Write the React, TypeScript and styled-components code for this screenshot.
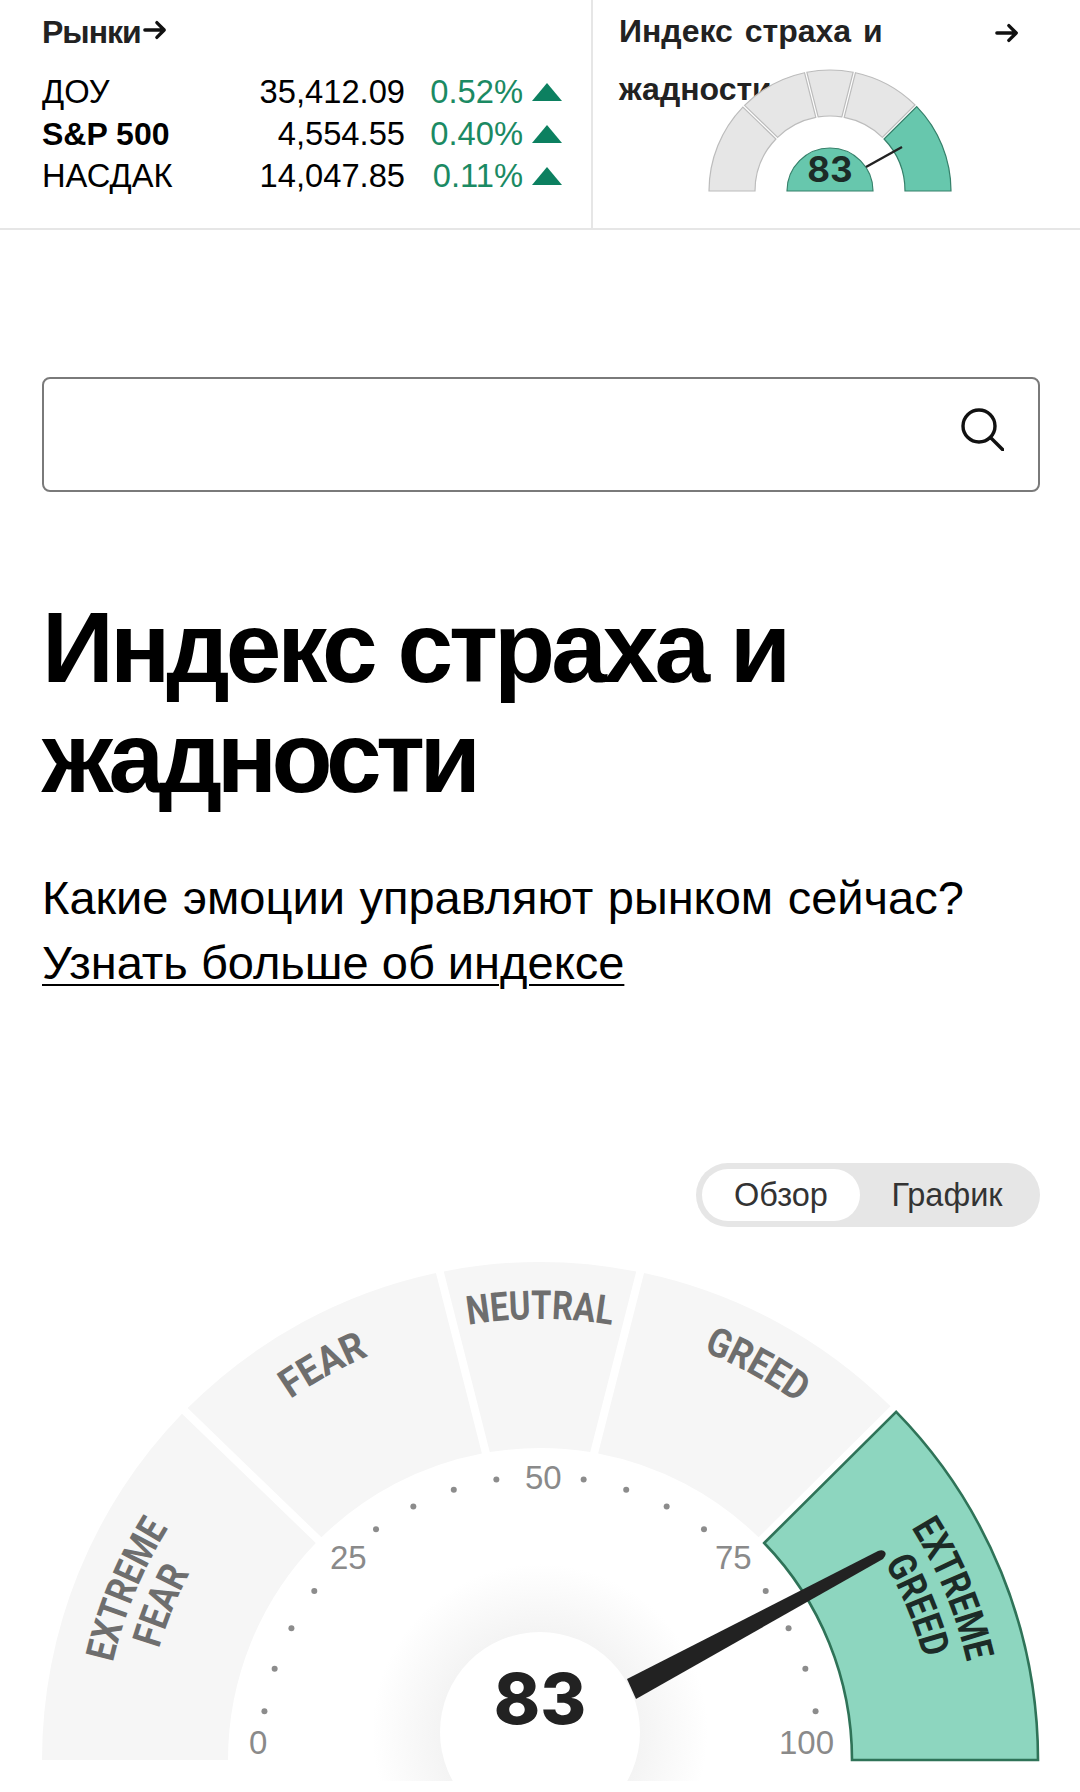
import React from 'react'
import styled, { createGlobalStyle } from 'styled-components'

const GlobalStyle = createGlobalStyle`
  html, body { margin: 0; padding: 0; background: #fff; }
  body { font-family: "Liberation Sans", Arial, sans-serif; color: #000; }
`

type Edge = { o: number; i: number; g: number }

const EDGES: Edge[] = [
  { o: 0, i: 0, g: 0 },
  { o: 44.5, i: 44.8, g: 4 },
  { o: 78.4, i: 80, g: 4 },
  { o: 101.6, i: 100, g: 4 },
  { o: 135.2, i: 135.2, g: 4 },
  { o: 180, i: 180, g: 0 },
]

const rad = (a: number) => (a * Math.PI) / 180
const deg = (a: number) => (a * 180) / Math.PI

const pt = (cx: number, cy: number, r: number, a: number) =>
  `${(cx - r * Math.cos(rad(a))).toFixed(2)} ${(cy - r * Math.sin(rad(a))).toFixed(2)}`

// one gauge slice, the gap is kept parallel to the edge
function slice(cx: number, cy: number, r0: number, r1: number, from: Edge, to: Edge, gap: number) {
  const g1 = from.g ? gap : 0
  const g2 = to.g ? gap : 0
  const a = from.o + deg(Math.asin(g1 / r1))
  const b = to.o - deg(Math.asin(g2 / r1))
  const c = to.i - deg(Math.asin(g2 / r0))
  const d = from.i + deg(Math.asin(g1 / r0))
  return `M${pt(cx, cy, r0, d)} L${pt(cx, cy, r1, a)} A${r1} ${r1} 0 0 1 ${pt(cx, cy, r1, b)} L${pt(cx, cy, r0, c)} A${r0} ${r0} 0 0 0 ${pt(cx, cy, r0, d)} Z`
}

const markets = [
  { name: 'ДОУ', value: '35,412.09', pct: '0.52%' },
  { name: 'S&P 500', value: '4,554.55', pct: '0.40%', bold: true },
  { name: 'НАСДАК', value: '14,047.85', pct: '0.11%' },
]

const CX = 498
const CY = 509

const labels = [
  { id: 'l1', text: 'EXTREME', r: 438, a: 22.4, len: 146 },
  { id: 'l2', text: 'FEAR', r: 397, a: 22.2, len: 82 },
  { id: 'l3', text: 'FEAR', r: 439, a: 61.2, len: 90 },
  { id: 'l4', text: 'NEUTRAL', r: 441, a: 90, len: 144 },
  { id: 'l5', text: 'GREED', r: 440, a: 118.8, len: 108 },
  { id: 'l6', text: 'EXTREME', r: 438, a: 157.5, len: 146, active: true },
  { id: 'l7', text: 'GREED', r: 397, a: 157.7, len: 103, active: true },
]

const scale = [
  { t: '0', x: 207, y: 503 },
  { t: '25', x: 288, y: 318 },
  { t: '50', x: 483, y: 238 },
  { t: '75', x: 673, y: 318 },
  { t: '100', x: 737, y: 503 },
]

const dots = Array.from({ length: 19 }, (_, i) => (i + 1) * 9).filter((a) => a % 45 !== 0 && a < 180)

function ArrowIcon() {
  return (
    <svg width="24" height="22" viewBox="0 0 26 22" fill="none" stroke="#111" strokeWidth="3.6" strokeLinecap="round" strokeLinejoin="round">
      <path d="M2 11h21M15 3l8 8-8 8" />
    </svg>
  )
}

function MiniGauge() {
  const cx = 125
  const cy = 123
  return (
    <MiniSvg width="250" height="126" viewBox="0 0 250 126">
      {EDGES.slice(0, 5).map((e, i) => (
        <path
          key={i}
          d={slice(cx, cy, 75, 121, e, EDGES[i + 1], 1.2)}
          fill={i === 4 ? '#67c7ad' : '#e6e6e6'}
          stroke={i === 4 ? '#35806a' : '#bcbcbc'}
          strokeWidth="1.2"
        />
      ))}
      <path d={`M${cx - 43} ${cy} A43 43 0 0 1 ${cx + 43} ${cy} Z`} fill="#67c7ad" stroke="#35806a" strokeWidth="1.2" />
      <line x1={161} y1={99} x2={197} y2={79} stroke="#222" strokeWidth="2.4" />
      <MiniValue x={cx} y={114}>83</MiniValue>
    </MiniSvg>
  )
}

function BigGauge() {
  return (
    <GaugeSvg width="998" height="530" viewBox="0 0 998 530">
      <defs>
        <radialGradient id="glow" cx="50%" cy="50%" r="50%">
          <stop offset="60%" stopColor="#f4f4f4" />
          <stop offset="100%" stopColor="#ffffff" />
        </radialGradient>
        {labels.map((l) => (
          <path
            key={l.id}
            id={l.id}
            d={`M${pt(CX, CY, l.r, l.a - 40)} A${l.r} ${l.r} 0 0 1 ${pt(CX, CY, l.r, l.a + 40)}`}
          />
        ))}
      </defs>
      {EDGES.slice(0, 5).map((e, i) => (
        <path
          key={i}
          d={slice(CX, CY, 312, 498, e, EDGES[i + 1], 4)}
          fill={i === 4 ? '#8dd6bf' : '#f6f6f6'}
          stroke={i === 4 ? '#2f7358' : 'none'}
          strokeWidth="2.6"
        />
      ))}
      {labels.map((l) => (
        <ZoneLabel key={l.id} $active={l.active} textAnchor="middle">
          <textPath href={`#${l.id}`} startOffset="50%" textLength={l.len} lengthAdjust="spacingAndGlyphs">
            {l.text}
          </textPath>
        </ZoneLabel>
      ))}
      {dots.map((a) => (
        <circle key={a} cx={CX - 279 * Math.cos(rad(a))} cy={504 - 279 * Math.sin(rad(a))} r="3" fill="#8c8c8c" />
      ))}
      {scale.map((s) => (
        <ScaleText key={s.t} x={s.x} y={s.y}>{s.t}</ScaleText>
      ))}
      <circle cx={CX} cy={481} r="168" fill="url(#glow)" />
      <circle cx={CX} cy={481} r="100" fill="#fff" />
      <Value x={CX} y={473}>83</Value>
      <path d="M585 428 L594 448 L841 308 Q845 304 843 301 Q841 298 836 300 Z" fill="#222" />
    </GaugeSvg>
  )
}

export default function App() {
  return (
    <Page>
      <GlobalStyle />
      <TopBar>
        <Markets>
          <MarketsTitle>Рынки<ArrowIcon /></MarketsTitle>
          <MarketRows>
            {markets.map((m) => (
              <MarketRow key={m.name}>
                <MarketName $bold={m.bold}>{m.name}</MarketName>
                <MarketValue>{m.value}</MarketValue>
                <MarketPct>{m.pct}</MarketPct>
                <Triangle />
              </MarketRow>
            ))}
          </MarketRows>
        </Markets>
        <IndexCard>
          <IndexTitle>Индекс страха и жадности</IndexTitle>
          <IndexArrow><ArrowIcon /></IndexArrow>
          <MiniGauge />
        </IndexCard>
      </TopBar>

      <Content>
        <SearchBox>
          <svg width="44" height="44" viewBox="0 0 44 44" fill="none" stroke="#111" strokeWidth="3.4" strokeLinecap="round">
            <circle cx="19" cy="19" r="16" />
            <path d="M31 31l12 12" />
          </svg>
        </SearchBox>
        <Title>Индекс страха и<br /><TightLine>жадности</TightLine></Title>
        <Lead>
          Какие эмоции управляют рынком сейчас?<br />
          <LeadLink href="#">Узнать больше об индексе</LeadLink>
        </Lead>
        <ToggleRow>
          <Toggle>
            <ToggleItem $active>Обзор</ToggleItem>
            <ToggleItem>График</ToggleItem>
          </Toggle>
        </ToggleRow>
        <BigGauge />
      </Content>
    </Page>
  )
}

const Page = styled.div`
  width: 1080px;
  height: 1792px;
  overflow: hidden;
  background: #fff;
`

const TopBar = styled.div`
  display: flex;
  height: 228px;
  border-bottom: 2px solid #e6e6e6;
`

const Markets = styled.div`
  width: 593px;
  box-sizing: border-box;
  padding: 12px 29px 0 42px;
  border-right: 2px solid #e6e6e6;
`

const MarketsTitle = styled.div`
  display: flex;
  align-items: center;
  height: 40px;
  font-size: 32px;
  font-weight: 700;
  letter-spacing: -1px;
  color: #222;
  svg { margin-top: -4px; margin-left: 2px; }
`

const MarketRows = styled.div`
  margin-top: 19px;
`

const MarketRow = styled.div`
  display: grid;
  grid-template-columns: 1fr 147px 118px 39px;
  align-items: center;
  height: 42px;
  font-size: 32.7px;
`

const MarketName = styled.div<{ $bold?: boolean }>`
  font-weight: ${(p) => (p.$bold ? 700 : 400)};
  font-size: ${(p) => (p.$bold ? '32px' : 'inherit')};
`

const MarketValue = styled.div`
  text-align: right;
`

const MarketPct = styled.div`
  text-align: right;
  color: #1b8a63;
`

const Triangle = styled.div`
  justify-self: end;
  width: 0;
  height: 0;
  border-left: 15px solid transparent;
  border-right: 15px solid transparent;
  border-bottom: 18px solid #0c8060;
`

const IndexCard = styled.div`
  position: relative;
  flex: 1;
  padding: 2px 0 0 26px;
  overflow: hidden;
`

const IndexTitle = styled.div`
  width: 300px;
  font-size: 32px;
  line-height: 58px;
  font-weight: 700;
  color: #222;
  word-spacing: 3px;
`

const IndexArrow = styled.div`
  position: absolute;
  top: 22px;
  left: 402px;
`

const MiniSvg = styled.svg`
  position: absolute;
  left: 112px;
  top: 68px;
`

const MiniValue = styled.text`
  font-family: Inter, "Liberation Sans", sans-serif;
  font-size: 35px;
  font-weight: 700;
  fill: #1c2b27;
  text-anchor: middle;
`

const Content = styled.div`
  padding: 147px 40px 0 42px;
`

const SearchBox = styled.div`
  display: flex;
  align-items: center;
  justify-content: flex-end;
  box-sizing: border-box;
  height: 115px;
  padding: 0 34px 12px 0;
  border: 2px solid #7a7a7a;
  border-radius: 8px;
`

const Title = styled.h1`
  margin: 100px 0 0;
  font-size: 100px;
  line-height: 110px;
  font-weight: 700;
  letter-spacing: -4px;
`

const TightLine = styled.span`
  letter-spacing: -5.5px;
`

const Lead = styled.div`
  margin-top: 53px;
  font-size: 47px;
  line-height: 65px;
  word-spacing: 1.5px;
`

const LeadLink = styled.a`
  color: #000;
  word-spacing: 0;
  text-decoration: underline;
  text-decoration-thickness: 2px;
  text-underline-offset: 5px;
`

const ToggleRow = styled.div`
  display: flex;
  justify-content: flex-end;
  margin-top: 168px;
`

const Toggle = styled.div`
  display: flex;
  box-sizing: border-box;
  width: 344px;
  height: 64px;
  padding: 6px;
  border-radius: 32px;
  background: #e6e6e6;
`

const ToggleItem = styled.div<{ $active?: boolean }>`
  display: flex;
  align-items: center;
  justify-content: center;
  width: ${(p) => (p.$active ? '158px' : '174px')};
  border-radius: 26px;
  font-size: 32.5px;
  color: #333;
  background: ${(p) => (p.$active ? '#fff' : 'transparent')};
`

const GaugeSvg = styled.svg`
  display: block;
  margin-top: 24px;
`

const ZoneLabel = styled.text<{ $active?: boolean }>`
  font-family: Roboto, "Liberation Sans", sans-serif;
  font-size: 40px;
  font-weight: 700;
  fill: ${(p) => (p.$active ? '#1c2b27' : '#6e6e6e')};
`

const ScaleText = styled.text`
  font-family: "Liberation Sans", Arial, sans-serif;
  font-size: 33px;
  fill: #8a8a8a;
`

const Value = styled.text`
  font-family: Inter, "Liberation Sans", sans-serif;
  font-size: 70px;
  font-weight: 800;
  fill: #222;
  text-anchor: middle;
`
